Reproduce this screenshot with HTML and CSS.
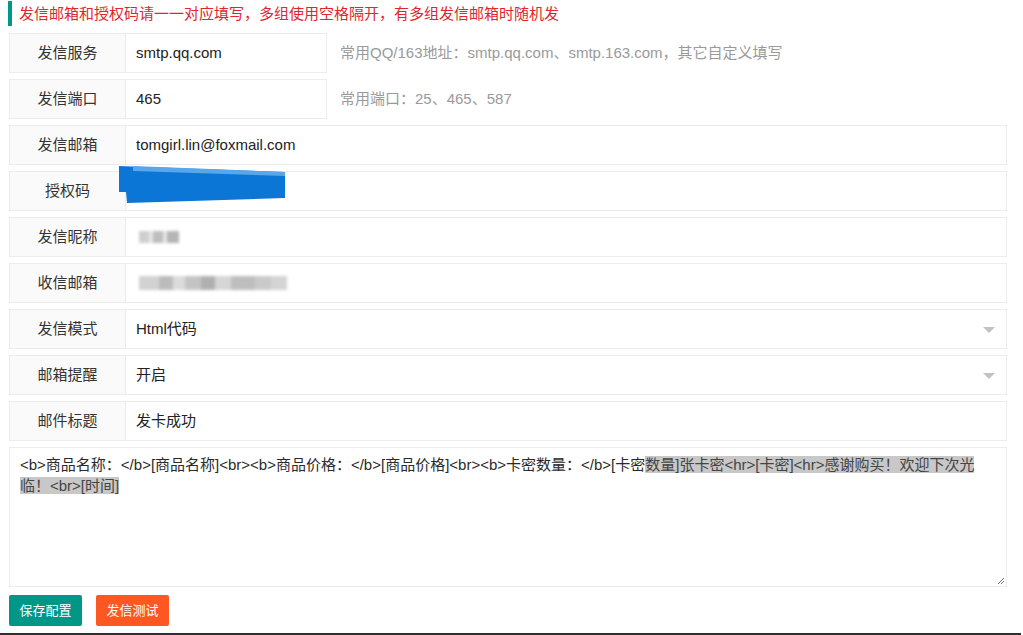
FILE: index.html
```html
<!DOCTYPE html>
<html lang="zh-CN">
<head>
<meta charset="utf-8">
<title>邮箱配置</title>
<link rel="stylesheet" href="styles.css">
</head>
<body>
<div class="page">
  <div class="quote">发信邮箱和授权码请一一对应填写，多组使用空格隔开，有多组发信邮箱时随机发</div>
  <div class="form">
    <div class="row">
      <div class="label">发信服务</div>
      <div class="field short">smtp.qq.com</div>
      <div class="hint">常用QQ/163地址：smtp.qq.com、smtp.163.com，其它自定义填写</div>
    </div>
    <div class="row">
      <div class="label">发信端口</div>
      <div class="field short">465</div>
      <div class="hint">常用端口：25、465、587</div>
    </div>
    <div class="row">
      <div class="label">发信邮箱</div>
      <div class="field">tomgirl.lin@foxmail.com</div>
    </div>
    <div class="row">
      <div class="label">授权码</div>
      <div class="field"></div>
      <svg class="redact" width="170" height="40" viewBox="0 0 170 40">
        <polygon points="0,0 166,6 166,32 8,37 7,26 0,26" fill="#0b76d5"/>
        <polygon points="14,0 166,6 166,10 14,5" fill="#5aa6ea"/>
      </svg>
    </div>
    <div class="row">
      <div class="label">发信昵称</div>
      <div class="field"><span class="blur nick"></span></div>
    </div>
    <div class="row">
      <div class="label">收信邮箱</div>
      <div class="field"><span class="blur mail"></span></div>
    </div>
    <div class="row">
      <div class="label">发信模式</div>
      <div class="field select">Html代码<span class="caret"></span></div>
    </div>
    <div class="row">
      <div class="label">邮箱提醒</div>
      <div class="field select">开启<span class="caret"></span></div>
    </div>
    <div class="row">
      <div class="label">邮件标题</div>
      <div class="field">发卡成功</div>
    </div>
    <div class="textarea">&lt;b&gt;商品名称：&lt;/b&gt;[商品名称]&lt;br&gt;&lt;b&gt;商品价格：&lt;/b&gt;[商品价格]&lt;br&gt;&lt;b&gt;卡密数量：&lt;/b&gt;[卡密<span class="sel">数量]张卡密&lt;hr&gt;[卡密]&lt;hr&gt;感谢购买！欢迎下次光</span><span class="sel">临！&lt;br&gt;[时间]</span>
      <svg class="grip" width="8" height="8" viewBox="0 0 8 8">
        <line x1="1" y1="7" x2="7" y2="1" stroke="#777" stroke-width="1"/>
        <line x1="4" y1="7" x2="7" y2="4" stroke="#777" stroke-width="1"/>
      </svg>
    </div>
    <div class="buttons">
      <div class="btn save">保存配置</div>
      <div class="btn test">发信测试</div>
    </div>
  </div>
</div>
</body>
</html>
```
FILE: styles.css
```css
html, body {
  margin: 0;
  padding: 0;
  background: #fff;
}
body {
  font-family: "Liberation Sans", "Noto Sans CJK SC", sans-serif;
  color: #333;
  font-size: 15px;
}
.page {
  width: 1021px;
  height: 635px;
  box-sizing: border-box;
  border-bottom: 2px solid #2e2e2e;
  overflow: hidden;
}
.quote {
  margin-left: 8px;
  margin-top: 1px;
  height: 25px;
  line-height: 25px;
  border-left: 4px solid #009688;
  padding-left: 7px;
  color: #e0262c;
  font-size: 15px;
}
.form {
  width: 998px;
  margin: 7px 0 0 9px;
}
.row {
  position: relative;
  display: flex;
  height: 40px;
  margin-bottom: 6px;
}
.label {
  width: 117px;
  flex: none;
  box-sizing: border-box;
  border: 1px solid #ececec;
  background: #fafafa;
  text-align: center;
  line-height: 38px;
  color: #333;
}
.field {
  position: relative;
  flex: 1;
  box-sizing: border-box;
  border: 1px solid #ececec;
  border-left: 0;
  padding: 0 10px;
  line-height: 38px;
  color: #222;
  background: #fff;
}
.field.short {
  flex: none;
  width: 201px;
}
.hint {
  padding-left: 13px;
  line-height: 40px;
  color: #9a9a9a;
}
.caret {
  position: absolute;
  right: 11px;
  top: 17px;
  width: 0;
  height: 0;
  border-left: 6px solid transparent;
  border-right: 6px solid transparent;
  border-top: 6px solid #c2c2c2;
}
.redact {
  position: absolute;
  left: 110px;
  top: -5px;
}
.blur {
  display: inline-block;
  vertical-align: middle;
  margin-left: 3px;
  filter: blur(1.4px);
}
.nick {
  width: 40px;
  height: 12px;
  background:
    linear-gradient(90deg, #cfcfcf 0 10px, transparent 10px 14px, #bdbdbd 14px 24px, transparent 24px 28px, #b5b5b5 28px 40px),
    linear-gradient(#e6e6e6, #e6e6e6);
  margin-top: -3px;
}
.mail {
  width: 148px;
  height: 14px;
  background:
    linear-gradient(90deg, #d2d2d2 0 20px, #bcbcbc 20px 34px, #dcdcdc 34px 46px, #c4c4c4 46px 62px, #b0b0b0 62px 76px, #d6d6d6 76px 92px, #bebebe 92px 116px, #cacaca 116px 132px, #d4d4d4 132px 148px);
  margin-top: -3px;
}
.textarea {
  position: relative;
  height: 140px;
  box-sizing: border-box;
  border: 1px solid #ececec;
  padding: 6px 10px;
  line-height: 21px;
  color: #2a2a2a;
  word-break: break-all;
}
.sel {
  background: #c8c8c8;
  color: #444;
}
.grip {
  position: absolute;
  right: 1px;
  bottom: 1px;
}
.buttons {
  display: flex;
  gap: 14px;
  margin-top: 8px;
}
.btn {
  height: 31px;
  line-height: 31px;
  padding: 0 10.5px;
  border-radius: 2px;
  color: #fff;
  font-size: 13px;
}
.save {
  background: #009688;
}
.test {
  background: #ff5722;
}
```
